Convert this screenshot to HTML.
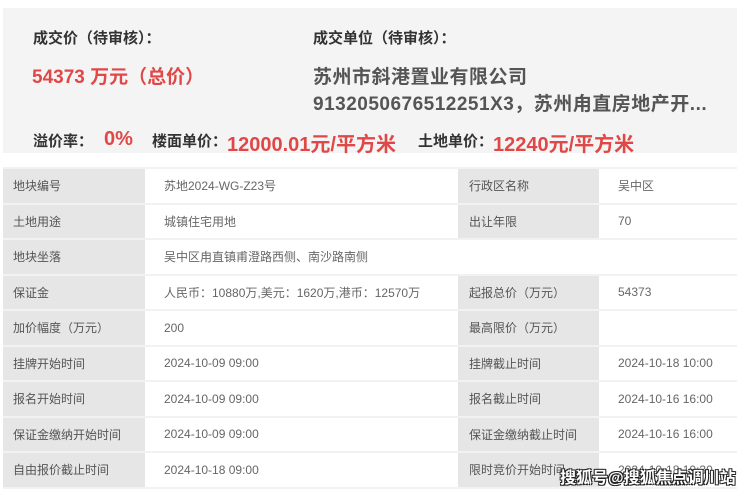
<!DOCTYPE html>
<html><head><meta charset="utf-8"><style>
body{margin:0;width:740px;height:493px;background:#fff;font-family:"Liberation Sans","Noto Sans CJK SC",sans-serif;position:relative;overflow:hidden}
.top{position:absolute;left:3px;top:8px;width:734px;height:145px;background:#f4f4f4}
.t{position:absolute;white-space:nowrap}
.lab{font-size:15px;color:#333;font-weight:bold}
.red{color:#e04848;font-weight:bold}
.co{font-size:19px;color:#555;font-weight:bold;letter-spacing:0.5px}
table{position:absolute;left:3px;top:167px;width:734px;border-collapse:collapse;font-size:12px;color:#666}
td{height:33.5px;padding:0;border:2px solid #f2f2f2;border-left:none;border-right:none}
td.l{background:#e6e6e6;color:#555;padding-left:10px;width:132px}
td.v{padding-left:19px;background:#fff}
td.l2{background:#e6e6e6;color:#555;padding-left:11px;width:130px}
.wm{position:absolute;left:560px;top:464px;font-size:16px;font-weight:bold;color:#fff;white-space:nowrap;text-shadow:-1px -1px 0 #222,1px -1px 0 #222,-1px 1px 0 #222,1px 1px 0 #222}
</style></head><body>
<div class="top"></div>
<div class="t lab" style="left:33px;top:27px">成交价（待审核）：</div>
<div class="t lab" style="left:313px;top:27px">成交单位（待审核）：</div>
<div class="t red" style="left:32px;top:62px;font-size:19px">54373 万元（总价）</div>
<div class="t co" style="left:313px;top:62px">苏州市斜港置业有限公司</div>
<div class="t co" style="left:313px;top:89px">9132050676512251X3，苏州甪直房地产开...</div>
<div class="t lab" style="left:33px;top:130px">溢价率：</div>
<div class="t red" style="left:104px;top:128px;font-size:20px">0%</div>
<div class="t lab" style="left:152px;top:130px">楼面单价：</div>
<div class="t red" style="left:227px;top:128px;font-size:20px">12000.01元/平方米</div>
<div class="t lab" style="left:418px;top:130px">土地单价：</div>
<div class="t red" style="left:493px;top:128px;font-size:20px">12240元/平方米</div>
<table>
<tr><td class="l">地块编号</td><td class="v" style="width:294px">苏地2024-WG-Z23号</td><td class="l2">行政区名称</td><td class="v">吴中区</td></tr>
<tr><td class="l">土地用途</td><td class="v">城镇住宅用地</td><td class="l2">出让年限</td><td class="v">70</td></tr>
<tr><td class="l">地块坐落</td><td class="v" colspan="3">吴中区甪直镇甫澄路西侧、南沙路南侧</td></tr>
<tr><td class="l">保证金</td><td class="v">人民币：10880万,美元：1620万,港币：12570万</td><td class="l2">起报总价（万元）</td><td class="v">54373</td></tr>
<tr><td class="l">加价幅度（万元）</td><td class="v">200</td><td class="l2">最高限价（万元）</td><td class="v"></td></tr>
<tr><td class="l">挂牌开始时间</td><td class="v">2024-10-09 09:00</td><td class="l2">挂牌截止时间</td><td class="v">2024-10-18 10:00</td></tr>
<tr><td class="l">报名开始时间</td><td class="v">2024-10-09 09:00</td><td class="l2">报名截止时间</td><td class="v">2024-10-16 16:00</td></tr>
<tr><td class="l">保证金缴纳开始时间</td><td class="v">2024-10-09 09:00</td><td class="l2">保证金缴纳截止时间</td><td class="v">2024-10-16 16:00</td></tr>
<tr><td class="l">自由报价截止时间</td><td class="v">2024-10-18 09:00</td><td class="l2">限时竞价开始时间</td><td class="v">2024-10-18 10:30</td></tr>
</table>
<div class="wm">搜狐号@搜狐焦点调川站</div>
</body></html>
